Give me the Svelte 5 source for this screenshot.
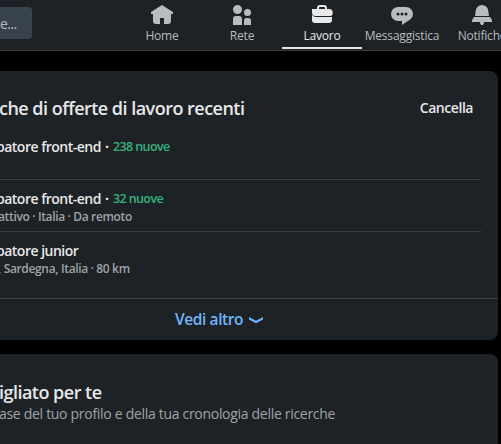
<script>
  const tabs = [
    { id: 'home', label: 'Home' },
    { id: 'rete', label: 'Rete' },
    { id: 'lavoro', label: 'Lavoro', active: true },
    { id: 'msg', label: 'Messaggistica' },
    { id: 'bell', label: 'Notifiche' }
  ];
  const searches = [
    { title: 'patore front-end', fresh: '238 nuove', detail: '' },
    { title: 'patore front-end', fresh: '32 nuove', detail: 'attivo · Italia · Da remoto' },
    { title: 'patore junior', fresh: '', detail: ', Sardegna, Italia · 80 km' }
  ];
</script>

<div class="page">
  <header>
    <div class="search"><span>e...</span></div>
    <nav>
      {#each tabs as tab}
        <div class="tab {tab.id}" class:active={tab.active}>
          <svg width="24" height="24" viewBox="0 0 24 24" fill="currentColor">
            {#if tab.id === 'home'}
              <path d="M23 9v2h-2v7a3 3 0 0 1-3 3h-4v-6h-4v6H6a3 3 0 0 1-3-3v-7H1V9l11-7 5 3.2 6 3.8z" />
            {:else if tab.id === 'rete'}
              <path d="M12 16v6H3v-6a3 3 0 0 1 3-3h3a3 3 0 0 1 3 3zm5.500-3A3.500 3.500 0 1 0 14 9.500a3.500 3.500 0 0 0 3.500 3.500zm1 2h-2a2.500 2.500 0 0 0-2.500 2.500V22h7v-4.500a2.500 2.500 0 0 0-2.500-2.500zM7.500 2A4.500 4.500 0 1 0 12 6.500 4.490 4.490 0 0 0 7.500 2z" />
            {:else if tab.id === 'lavoro'}
              <path d="M17 6V5a3 3 0 0 0-3-3h-4a3 3 0 0 0-3 3v1H2v3.500A3.500 3.500 0 0 0 5.500 13H20a2.700 2.700 0 0 0 2.700-2.700V9.500A3.500 3.500 0 0 0 19.200 6zM9 5a1 1 0 0 1 1-1h4a1 1 0 0 1 1 1v1H9zM22 14v3a3 3 0 0 1-3 3H5a3 3 0 0 1-3-3v-4.880A4.500 4.500 0 0 0 5.500 14z" />
            {:else if tab.id === 'msg'}
              <path d="M16 4H8a7 7 0 0 0 0 14h4v4l8.160-5.390A6.780 6.780 0 0 0 23 11a7 7 0 0 0-7-7zm-8 8.500A1.500 1.500 0 1 1 9.500 11 1.500 1.500 0 0 1 8 12.500zm4 0a1.500 1.500 0 1 1 1.500-1.500 1.500 1.500 0 0 1-1.500 1.500zm4 0a1.500 1.500 0 1 1 1.500-1.500 1.500 1.500 0 0 1-1.500 1.500z" />
            {:else}
              <path d="M22 19h-8.280a2 2 0 1 1-3.440 0H2v-1a4.520 4.520 0 0 1 1.170-2.830l1-1.170h15.700l1 1.170A4.420 4.420 0 0 1 22 18zM18.210 7.440A6.270 6.270 0 0 0 12 2a6.270 6.270 0 0 0-6.210 5.440L5 13h14z" />
            {/if}
          </svg>
          <span>{tab.label}</span>
        </div>
      {/each}
    </nav>
  </header>

  <section class="recent">
    <div class="heading">
      <h2>che di offerte di lavoro recenti</h2>
      <button>Cancella</button>
    </div>
    <ul>
      {#each searches as s}
        <li>
          <div class="title">
            <b>{s.title}</b>{#if s.fresh}<i>·</i><em>{s.fresh}</em>{/if}
          </div>
          {#if s.detail}<div class="detail">{s.detail}</div>{/if}
        </li>
      {/each}
    </ul>
    <div class="more">
      <span>Vedi altro</span>
      <svg width="16" height="16" viewBox="0 0 16 16" fill="currentColor"><path d="M8 11.300 1 7.500V5l7 3.800L15 5v2.500z" /></svg>
    </div>
  </section>

  <section class="suggested">
    <h2>igliato per te</h2>
    <p>ase del tuo profilo e della tua cronologia delle ricerche</p>
  </section>
</div>

<style>
  .page {
    width: 501px;
    height: 444px;
    overflow: hidden;
    background: #000;
    font-family: "Open Sans", "Noto Sans", sans-serif;
    color: #e8e8e8;
    white-space: nowrap;
  }
  header {
    height: 50px;
    background: #1d2226;
    border-bottom: 1px solid #393d40;
    display: flex;
    overflow: hidden;
  }
  .search {
    flex: none;
    box-sizing: border-box;
    width: 32px;
    height: 32px;
    margin-top: 7px;
    background: #38434f;
    border-radius: 0 4px 4px 0;
    color: #b8bcc0;
    font-size: 14px;
    line-height: 34px;
    letter-spacing: -0.6px;
  }
  nav {
    display: flex;
    margin-left: 90px;
  }
  .tab {
    flex: none;
    box-sizing: border-box;
    width: 80px;
    height: 49px;
    padding-top: 3px;
    display: flex;
    flex-direction: column;
    align-items: center;
    color: #b9bbbc;
    font-size: 12px;
    line-height: 18px;
    letter-spacing: -0.2px;
  }
  .tab svg { flex: none; }
  .tab.active { color: #e8e8e8; border-bottom: 2px solid #e8e8e8; }
  .recent, .suggested {
    width: 498px;
    box-sizing: border-box;
    background: #1d2226;
  }
  .recent {
    height: 269px;
    margin-top: 20px;
    border-radius: 0 8px 8px 0;
  }
  .heading {
    height: 57px;
    padding: 17px 25px 0 0;
    box-sizing: border-box;
    display: flex;
    justify-content: space-between;
  }
  h2 {
    margin: 0 0 0 -1px;
    font-size: 18px;
    line-height: 40px;
    font-weight: 600;
    letter-spacing: -0.52px;
  }
  button {
    border: 0;
    padding: 0;
    background: none;
    color: inherit;
    font: 600 14px/40px "Open Sans", sans-serif;
    letter-spacing: -0.45px;
  }
  ul {
    list-style: none;
    margin: 0 17px 0 0;
    padding: 0;
  }
  li {
    height: 52px;
    box-sizing: border-box;
    padding-top: 9px;
    border-bottom: 1px solid #3c4043;
  }
  li:last-child { height: 66px; border: 0; }
  .title { display: flex; font-size: 14px; line-height: 20px; height: 20px; }
  .title b { font-weight: 600; margin-left: -4px; letter-spacing: -0.5px; }
  .title i { font-style: normal; font-weight: 700; margin: 0 4px; }
  .title em { font-style: normal; color: #35b37e; font-size: 12.5px; font-weight: 600; line-height: 20px; letter-spacing: -0.6px; }
  .detail { margin-left: -2px; font-size: 12px; line-height: 16px; font-weight: 600; color: #a0a3a5; letter-spacing: -0.35px; }
  .more {
    height: 42px;
    box-sizing: border-box;
    border-top: 1px solid #3c4043;
    display: flex;
    align-items: center;
    padding: 0 0 1px 175px;
    gap: 5px;
    color: #70b5f9;
    font-size: 15.5px;
    font-weight: 600;
    letter-spacing: -0.4px;
  }
  .more svg { margin-top: 1px; }
  .suggested {
    height: 100px;
    margin-top: 14px;
    padding-top: 18px;
    border-radius: 0 8px 0 0;
  }
  p { margin: -8px 0 0 -1px; font-size: 14px; line-height: 20px; color: #a0a3a5; letter-spacing: -0.3px; }
</style>
